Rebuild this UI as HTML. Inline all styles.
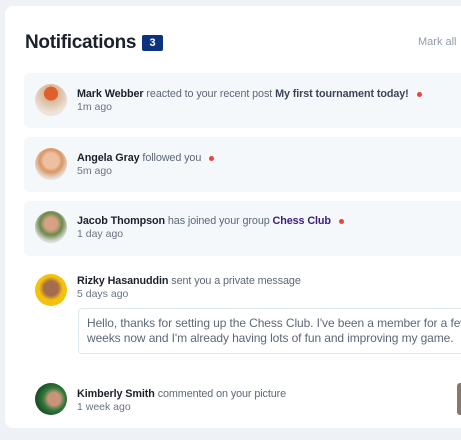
<!DOCTYPE html>
<html><head><style>
*{margin:0;padding:0;box-sizing:border-box}
body{width:461px;height:440px;background:#eef2f6;font-family:"Liberation Sans",sans-serif;overflow:hidden;position:relative}
.card{position:absolute;left:5px;top:6px;width:480px;height:422px;background:#fff;border-radius:8px}
.h{position:absolute;left:25px;top:32px;font-size:19px;font-weight:bold;color:#1c202b;letter-spacing:-0.3px}
.badge{position:absolute;left:142px;top:35px;width:21px;height:16px;background:#0a327f;color:#fff;border-radius:2px;font-size:11px;font-weight:bold;text-align:center;line-height:16px}
.mark{position:absolute;left:418px;top:36px;font-size:11px;color:#939cad}
.item{position:absolute;left:24px;width:460px;height:55px;border-radius:6px}
.bg{background:#f5f8fb}
.av{position:absolute;left:11px;width:32px;height:32px;border-radius:50%}
.t{position:absolute;left:53px;font-size:10.8px;color:#5e6778;white-space:nowrap;letter-spacing:-0.1px}
.t b{color:#1c202b}
.t2{position:absolute;left:53px;font-size:10.5px;color:#6b7385;white-space:nowrap}
.dot{display:inline-block;width:5px;height:5px;background:#f04141;border-radius:50%;margin-left:8px;vertical-align:middle}
.msg{position:absolute;left:78px;top:308px;width:400px;height:46px;border:1px solid #dde7ee;border-radius:4px;font-size:12px;color:#5e6778;padding:7px 0 0 8px;line-height:14.5px;white-space:nowrap;letter-spacing:-0.1px}
</style></head><body>
<div class="card"></div>
<div class="h">Notifications</div><div class="badge">3</div>
<div class="mark">Mark all</div>
<div class="item bg" style="top:73px"><div class="av" style="top:11px;background:radial-gradient(circle at 50% 30%,#e0602c 25%,#d9b79a 26%,#ece4db 70%)"></div>
<div class="t" style="top:15px"><b>Mark Webber</b> reacted to your recent post <b style="color:#3c4456">My first tournament today!</b><span class="dot"></span></div><div class="t2" style="top:28px">1m ago</div></div>
<div class="item bg" style="top:137px"><div class="av" style="top:11px;background:radial-gradient(circle at 50% 40%,#eec0a0 30%,#d99565 45%,#e7ddd6 70%)"></div>
<div class="t" style="top:15px"><b>Angela Gray</b> followed you<span class="dot"></span></div><div class="t2" style="top:28px">5m ago</div></div>
<div class="item bg" style="top:201px"><div class="av" style="top:10px;background:radial-gradient(circle at 50% 40%,#d7a184 25%,#6b8a4a 45%,#d7dad8 70%)"></div>
<div class="t" style="top:14px"><b>Jacob Thompson</b> has joined your group <b style="color:#3a1d7a">Chess Club</b><span class="dot"></span></div><div class="t2" style="top:27px">1 day ago</div></div>
<div class="item" style="top:265px"><div class="av" style="top:9px;background:radial-gradient(circle at 50% 45%,#a46b4c 30%,#f4c20d 50%)"></div>
<div class="t" style="top:10px"><b>Rizky Hasanuddin</b> sent you a private message</div><div class="t2" style="top:23px">5 days ago</div></div>
<div class="msg">Hello, thanks for setting up the Chess Club. I've been a member for a few<br>weeks now and I'm already having lots of fun and improving my game.</div>
<div class="item" style="top:373px"><div class="av" style="top:10px;background:radial-gradient(circle at 60% 50%,#c9957a 25%,#2f7a3a 45%,#1f4d2a 70%)"></div>
<div class="t" style="top:15px"><b>Kimberly Smith</b> commented on your picture</div><div class="t2" style="top:28px">1 week ago</div></div>
<div style="position:absolute;left:457px;top:383px;width:10px;height:32px;background:#8a7866;border-radius:3px"></div>
</body></html>
